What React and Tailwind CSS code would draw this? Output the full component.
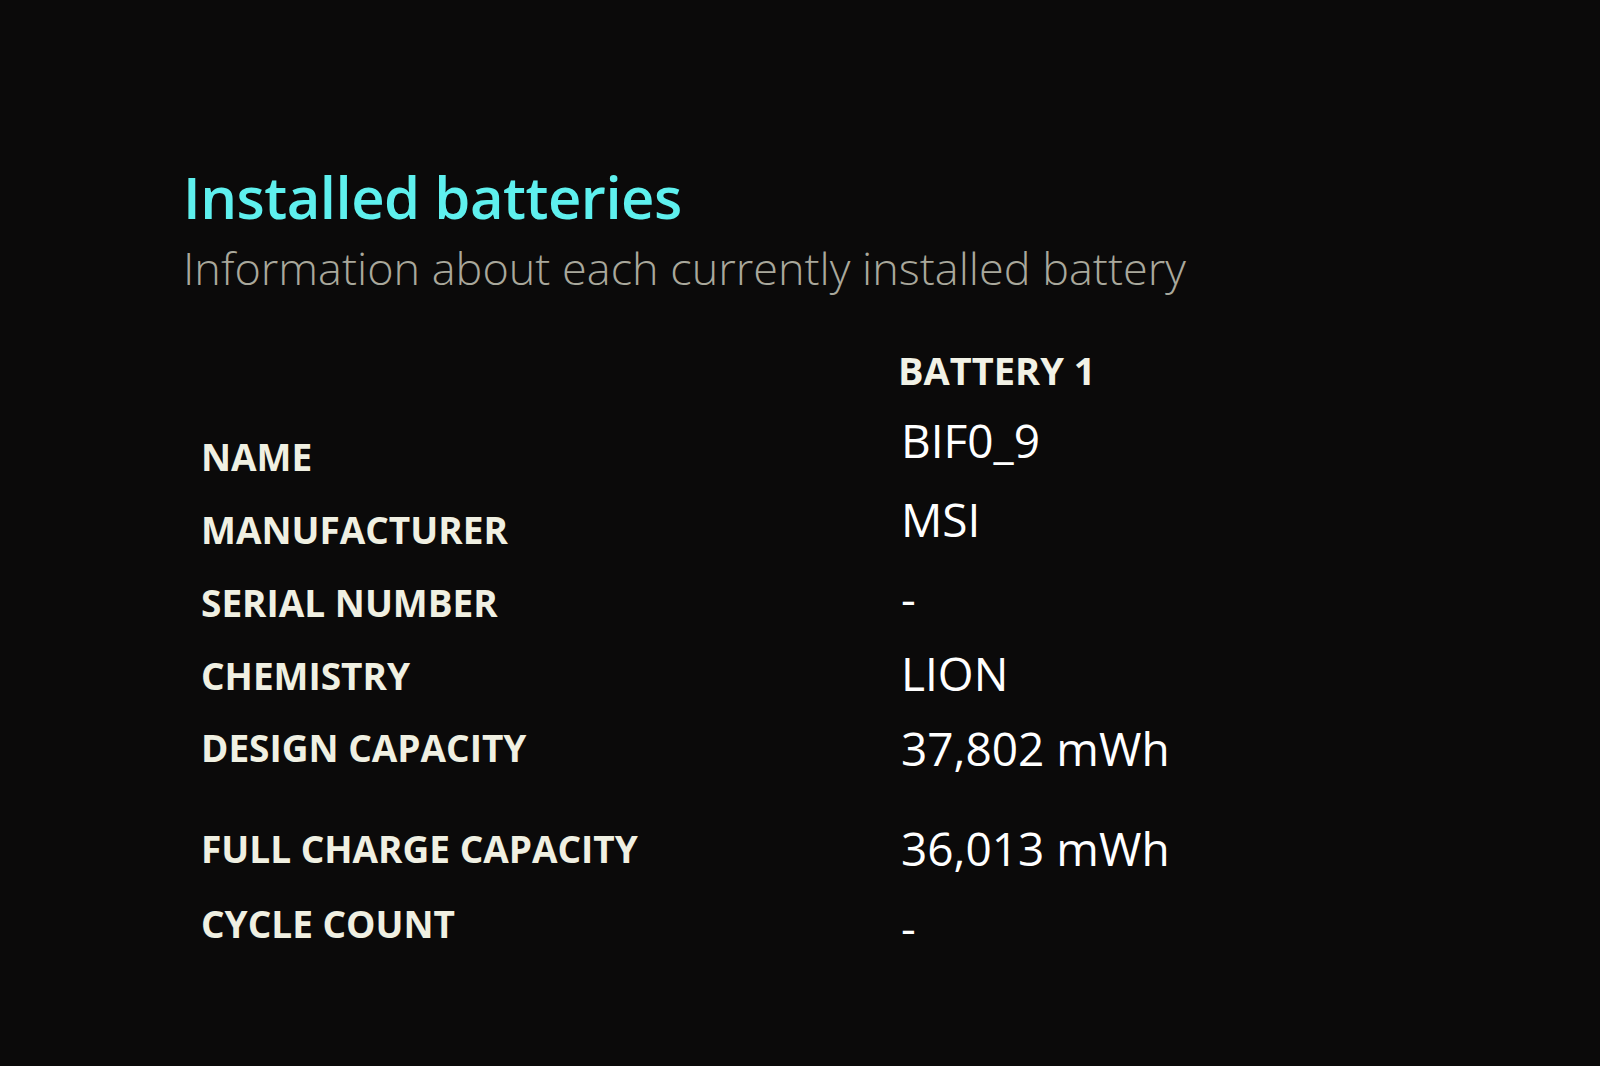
const rows = [
  { label: 'NAME', value: 'BIF0_9', lift: '-mt-[32px]' },
  { label: 'MANUFACTURER', value: 'MSI', lift: '-mt-[20px]' },
  { label: 'SERIAL NUMBER', value: '-', lift: '-mt-[8px]' },
  { label: 'CHEMISTRY', value: 'LION', lift: '-mt-[4px]' },
  { label: 'DESIGN CAPACITY', value: '37,802 mWh', tall: true },
  { label: 'FULL CHARGE CAPACITY', value: '36,013 mWh' },
  { label: 'CYCLE COUNT', value: '-', lift: 'mt-[8px]' },
];

export default function App() {
  return (
    <div
      className="w-[1600px] h-[1066px] bg-[#0b0a0a] overflow-hidden pl-[183px] pt-[162px]"
      style={{ fontFamily: '"Open Sans", "Noto Sans", sans-serif' }}
    >
      {/* Section header */}
      <h1 className="text-[58px] leading-[70px] font-semibold text-[#5ef0ee] tracking-[-0.5px]">
        Installed batteries
      </h1>
      <p className="text-[45px] leading-[52px] font-light text-[#a9a89c] mt-[10px]">
        Information about each currently installed battery
      </p>

      {/* Battery table */}
      <div className="mt-[46px] pl-[18px]">
        <div className="grid grid-cols-[700px_1fr] h-[60px] items-center mb-[20px]">
          <div />
          <div className="text-[38px] font-bold text-[#f2f2e6] -ml-[3px]">BATTERY 1</div>
        </div>
        {rows.map(row => (
          <div
            key={row.label}
            className={`grid grid-cols-[700px_1fr] items-center ${row.tall ? 'h-[100px]' : 'h-[73px]'}`}
          >
            <div className={`text-[37px] font-bold text-[#f0f0e2] ${row.tall ? '-mt-[28px]' : ''}`}>
              {row.label}
            </div>
            <div className={`text-[46px] text-white ${row.tall ? '-mt-[28px]' : ''} ${row.lift || ''}`}>
              {row.value}
            </div>
          </div>
        ))}
      </div>
    </div>
  );
}
